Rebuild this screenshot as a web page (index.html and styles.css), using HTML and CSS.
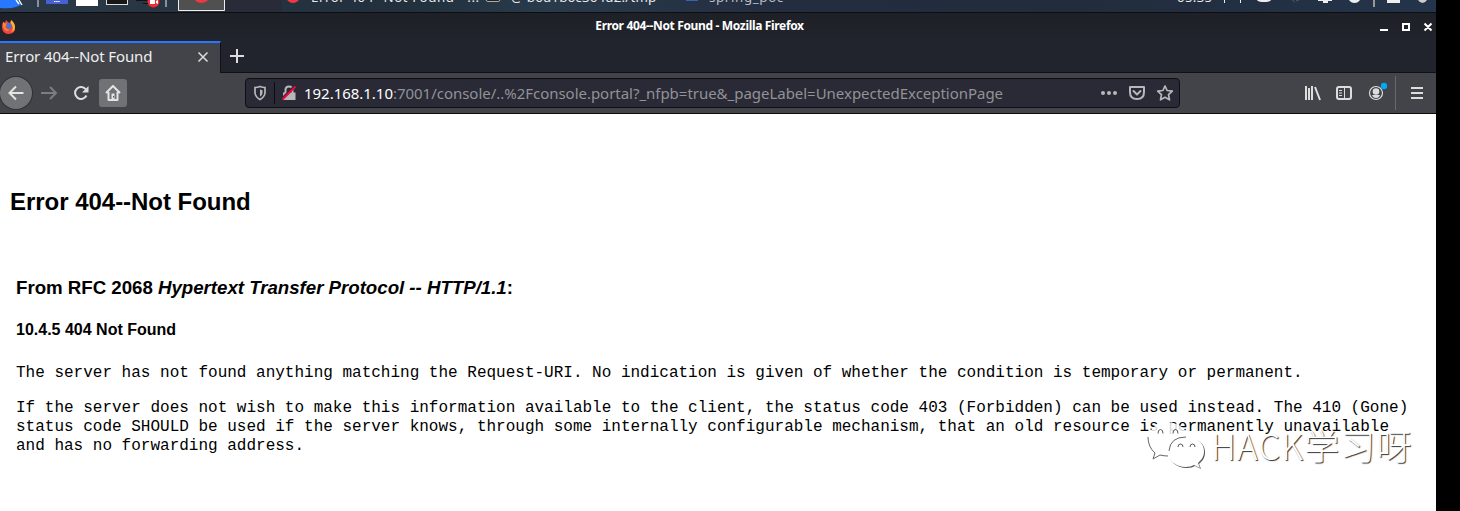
FILE: index.html
```html
<!DOCTYPE html>
<html lang="en">
<head>
<meta charset="utf-8">
<title>Error 404--Not Found</title>
<link rel="stylesheet" href="styles.css">
</head>
<body>
<div class="desktop">
  <div class="panel">
    <svg class="launchers" width="284" height="12" viewBox="0 0 284 12">
      <path d="M0 0H18L21 5 16 7Q10 9 0 8Z" fill="#2777ff"/>
      <path d="M16 0l3 4M19 0l3 5" stroke="#fff" stroke-width="1.3"/>
      <path d="M37 0h2v7h-2zM165 0h2v7h-2z" fill="#8b9095"/>
      <path d="M46 0h22v4h-22z" fill="#4561d2"/><path d="M54 1.5h6" stroke="#fff" stroke-dasharray="1.5 .6"/>
      <path d="M76 0h22v6h-22z" fill="#fff"/>
      <path d="M106 0h22v5h-22z" fill="#ddd"/><path d="M107 0h20v4h-20z" fill="#171717"/>
      <path d="M136 0h14v1h-14zM143 3h6v1h-6z" fill="#111"/>
      <circle cx="153.500" cy="1.500" r="6" fill="#ee2b35"/><path d="M150 0h5v4h-5zM156 1l2-1v4l-2-1z" fill="#fff"/>
      <path d="M178.500-2v12.500h46V-2" fill="#505050" stroke="#eee"/>
      <ellipse cx="201.500" cy="-2" rx="7" ry="5" fill="#f1373f"/>
      <path d="M225 0h57v12h-57z" fill="#292b39"/>
    </svg>
    <svg class="task-icon" width="20" height="12" viewBox="0 0 20 12"><circle cx="9" cy="-4" r="7" fill="#f1373f"/></svg>
    <span class="task t1">Error 404--Not Found - ...</span>
    <svg class="task-icon" width="22" height="12" viewBox="0 0 22 12"><rect x="3" y="-8" width="14" height="9.500" rx="2" fill="#222" stroke="#aaa"/></svg>
    <span class="task t2">@ b6d1b6c364d2:/tmp</span>
    <svg class="task-icon" width="20" height="12" viewBox="0 0 20 12"><path d="M8 0h14v1H8z" fill="#3465bd"/></svg>
    <span class="task t3">spring_poc</span>
    <span class="clock">05:35</span>
    <svg class="tray" width="223" height="12" viewBox="0 0 223 12">
      <path d="M9 0h1v3H9zM25 0h1v3h-1z" fill="#e4f3fa"/>
      <path d="M42 0h14q-1 2-7 2t-7-2z" fill="#eee"/>
      <path d="M77 0l3 2M84 0l-3 1" stroke="#556" />
      <path d="M103 0h14v1h-14zM108 1h5v2h-5z" fill="#eee"/>
      <path d="M134 0h11q-2 3-5.500 3t-5.500-3z" fill="#eee"/>
      <path d="M158 0h2v7h-2z" fill="#999"/>
      <path d="M172 0h13v3h-13z" fill="#eee"/>
      <path d="M203 0h9q-2 3-4.500 3T203 0z" fill="#ccc"/>
    </svg>
  </div>
  <div class="titlebar">
    <svg class="fox" width="16" height="16" viewBox="0 0 16 16">
      <path d="M2 3l2 1 1-3 2 2 2 1 1-3 3 4 1 3q1 6-6 7-6 0-7-6Q1 5 2 3z" fill="#f0473d"/>
      <path d="M10 1q4 3 4 7 0 4-4 5 3-3 1-7Q9 4 10 1z" fill="#ffb32f"/>
      <path d="M2 3l2 1 2 1-2 3 2 2 3 1-3 1Q1 10 2 3z" fill="#ff8238"/>
      <path d="M6 4h3l2 3q-1 3-3 3T5 8l2-1-2-1z" fill="#3d78d6"/>
    </svg>
    <span class="window-title">Error 404--Not Found - Mozilla Firefox</span>
    <svg class="window-buttons" width="60" height="16" viewBox="0 0 60 16"><path d="M4 11h8v2H4z" fill="#fff"/><path d="M27 6h6v6h-6zM48.500 5.500l7 7M55.500 5.500l-7 7" fill="none" stroke="#fff" stroke-width="2"/></svg>
  </div>
  <div class="tabs">
    <div class="tab"><span class="tab-title">Error 404--Not Found</span>
      <svg width="12" height="12" viewBox="0 0 12 12"><path d="M1.500 1.500l9 9M10.500 1.500l-9 9" stroke="#ddd" stroke-width="1.500"/></svg>
    </div>
    <svg class="new-tab" width="16" height="16" viewBox="0 0 16 16"><path d="M8 1v14M1 8h14" stroke="#ddd" stroke-width="2"/></svg>
  </div>
  <div class="toolbar">
    <div class="back"><svg width="16" height="16" viewBox="0 0 16 16"><path d="M15.500 8H1.500M8 1.500L1.500 8 8 14.500" fill="none" stroke="#e4e4e5" stroke-width="2"/></svg></div>
    <svg class="forward" width="18" height="16" viewBox="0 0 18 16"><path d="M1 8h15M10 2l6 6-6 6" fill="none" stroke="#7c7d80" stroke-width="2"/></svg>
    <svg class="reload" width="16" height="16" viewBox="0 0 16 16"><path d="M13.500 10.500A6 6 0 1 1 13 4.500" fill="none" stroke="#ddd" stroke-width="2"/><path d="M15.500 1v6.500H9z" fill="#ddd"/></svg>
    <div class="home"><svg width="16" height="16" viewBox="0 0 16 16"><path d="M1 8l7-7 7 7M3.500 7v8h9V7" fill="none" stroke="#e4e4e5" stroke-width="2" stroke-linejoin="round"/><path d="M6.500 8.500h3V15h-3z" fill="#e4e4e5"/><path d="M8 11h1v1.500H8z" fill="#555"/></svg></div>
    <div class="urlbar">
      <svg class="shield" width="14" height="16" viewBox="0 0 14 16"><path d="M2 2.500Q4.500 2.500 7 1.500q2.500 1 5 1V8q-.5 4-5 6.500Q2.500 12 2 8z" fill="none" stroke="#b8b8bb" stroke-width="1.700"/><path d="M7 4.500l2.500.7V8q0 2-2.500 3.700z" fill="#b8b8bb"/></svg>
      <span class="divider"></span>
      <svg class="lock" width="16" height="16" viewBox="0 0 16 16"><path d="M4.500 8V5q0-3.500 3.500-3.500T11.500 5v3" fill="none" stroke="#b8b8bb" stroke-width="2"/><path d="M2 7.500h12.500V15H2z" fill="#b8b8bb"/><path d="M.5 14L13.500 1" stroke="#292a35" stroke-width="2"/><path d="M1.500 14.500L14.500 1.500" stroke="#f5053f" stroke-width="2"/></svg>
      <span class="url"><span class="host">192.168.1.10</span>:7001/console/..%2Fconsole.portal?_nfpb=true&amp;_pageLabel=UnexpectedExceptionPage</span>
      <svg class="url-actions" width="76" height="18" viewBox="0 0 76 18">
        <g fill="#b8b8bb"><circle cx="4" cy="9" r="2"/><circle cx="10" cy="9" r="2"/><circle cx="16" cy="9" r="2"/></g>
        <g fill="none" stroke="#b8b8bb" stroke-width="2" stroke-linejoin="round"><path d="M31 3h14v5q0 7-7 7t-7-7z"/><path d="M34.500 7L38 10.500 41.500 7" stroke-linecap="round"/><path stroke-width="1.700" d="M66 2l2.100 4.500 5.200.6-3.800 3.600 1 5.100-4.500-2.500-4.500 2.500 1-5.100-3.800-3.600 5.200-.6z"/></g>
      </svg>
    </div>
    <div class="actions">
      <svg width="86" height="22" viewBox="0 0 86 22">
        <path d="M3 4v14M6 6v12M9 4v14M12 5l5 13" stroke="#ddd" stroke-width="2" fill="none"/>
        <rect x="34" y="5" width="14" height="12" rx="2" fill="none" stroke="#ddd" stroke-width="2"/><path d="M41.500 5v12M36 8.500h3M36 11h3M36 13.500h3" stroke="#ddd"/>
        <circle cx="73" cy="11" r="6.500" fill="none" stroke="#ddd" stroke-width="1.200"/><circle cx="73" cy="9.500" r="3.300" fill="#ddd"/><path d="M69 13h8q-1 3-4 3t-4-3z" fill="#ddd"/><circle cx="81" cy="4" r="3.200" fill="#00a9f4"/>
      </svg>
      <span class="divider"></span>
      <svg class="menu" width="14" height="14" viewBox="0 0 14 14"><path d="M1 2h12M1 7h12M1 12h12" stroke="#ddd" stroke-width="2"/></svg>
    </div>
  </div>
  <main class="page">
    <h2>Error 404--Not Found</h2>
    <section>
      <h3>From RFC 2068 <i>Hypertext Transfer Protocol -- HTTP/1.1</i>:</h3>
      <h4>10.4.5 404 Not Found</h4>
      <p>The server has not found anything matching the Request-URI. No indication is given of whether the condition is temporary or permanent.</p>
      <p>If the server does not wish to make this information available to the client, the status code 403 (Forbidden) can be used instead. The 410 (Gone)<br>status code SHOULD be used if the server knows, through some internally configurable mechanism, that an old resource is permanently unavailable<br>and has no forwarding address.</p>
    </section>
    <div class="watermark">
      <svg width="60" height="50" viewBox="0 0 60 50">
        <path d="M21 2C8 2 1 11 1 20q0 8 7 14l-2 6 7-4q5 2 10 1 18 0 18-17Q40 4 21 2z" fill="#fff" fill-opacity=".85"/>
        <path d="M1 17q0 10 7 16l-2 6 7-4q4 1 8 1" fill="none" stroke="#666"/>
        <path class="bubble" d="M39 17c-12 0-18 7-18 15s7 15 18 15q5 0 8-2l6 3-2-5q6-5 6-11 0-14-18-15z"/>
        <path d="M22 31q1-14 17-14" fill="none" stroke="#666"/>
        <g fill="none" stroke="#555"><path d="M11 13.500q0-4 2.500-4t2.500 4M26 13.500q0-4 2.500-4t2.500 4M31 27q0-3 2.500-3t2.500 3M43 27q0-3 2.500-3t2.500 3"/></g>
      </svg>
      <span>HACK学习呀</span>
    </div>
  </main>
</div>
</body>
</html>
```
FILE: styles.css
```css
* { box-sizing: border-box; }
body { margin: 0; background: #000; overflow: hidden; font-family: "Noto Sans", sans-serif; }
svg { display: block; flex: none; }
.desktop { width: 1436px; height: 511px; display: flex; flex-direction: column; background: #fff; }
.panel { height: 13px; flex: none; display: flex; overflow: hidden; background: linear-gradient(90deg, #2c3948, #21303c 28%, #293a4b 38%, #242d40 55%, #222c3c 75%, #24344a); border-bottom: 1px solid #0d0e12; }
.task, .clock { height: 20px; margin-top: -13px; line-height: 20px; font-size: 13.3px; white-space: nowrap; color: #e8e8e8; flex: none; }
.t1 { width: 179px; padding-left: 7px; letter-spacing: .55px; }
.t2 { width: 173px; padding-left: 6px; letter-spacing: .2px; }
.t3 { color: #b8bdc5; padding-left: 11px; width: 480px; letter-spacing: .65px; }
.clock { width: 38px; margin-left: -1px; letter-spacing: .3px; }
.titlebar { height: 28px; flex: none; display: flex; align-items: center; background: linear-gradient(#1e2027, #22242d); }
.fox { margin-left: 1px; }
.window-title { flex: 1; margin: -2px 0 0 6px; text-align: center; color: #fff; font-size: 12px; letter-spacing: -.34px; font-weight: 700; line-height: 16px; }
.window-buttons { margin: -3px 0 0; }
.tabs { height: 32px; flex: none; display: flex; background: #22242d; border-bottom: 1px solid #101116; }
.tab { width: 221px; height: 32px; margin-bottom: -1px; display: flex; align-items: center; justify-content: space-between; padding: 0 11px 1px 5px; background: #42444a; border-top: 2px solid #2777ff; border-right: 1px solid #101116; color: #f0f0f0; font-size: 15px; letter-spacing: -.1px; line-height: 20px; }
.tab-title { margin-top: -3px; }
.tab svg { margin-top: -1px; }
.new-tab { margin: 7px 0 0 8px; }
.toolbar { height: 41px; flex: none; display: flex; align-items: center; background: #42444a; border-bottom: 1px solid #0b0b0d; }
.back { width: 32px; height: 32px; display: grid; place-items: center; border-radius: 50%; background: #717276; box-shadow: 0 0 0 1px #303137; }
.forward { margin-left: 8px; }
.reload { margin-left: 15px; }
.home { width: 28px; height: 28px; margin-left: 10px; border-radius: 3px; display: grid; place-items: center; background: #717276; }
.urlbar { width: 935px; height: 30px; margin-left: 118px; padding: 0 4px 0 7px; display: flex; align-items: center; background: #292a35; border: 1px solid #0e0f14; border-radius: 4px; }
.urlbar .divider { width: 1px; height: 22px; background: #0c0c0e; margin-left: 7px; }
.lock { margin-left: 6px; }
.url { flex: 1; margin-left: 7px; font-size: 15px; letter-spacing: -.027px; line-height: 22px; color: #929297; white-space: nowrap; }
.host { color: #fff; }
.actions { display: flex; align-items: center; margin-left: 123px; }
.actions .divider { width: 1px; height: 34px; margin-left: 6px; background: #68696d; }
.menu { margin-left: 14px; }
.page { flex: 1; position: relative; padding: 74px 10px 0; color: #000; }
h2, h3, h4, p { margin: 0; white-space: nowrap; }
h2, h3, h4 { font-family: "Liberation Sans", Arial, sans-serif; }
h2 { font-size: 24px; line-height: 28px; letter-spacing: -.03px; }
section { padding: 61px 0 0 6px; }
h3 { font-size: 18.72px; line-height: 22px; letter-spacing: -.03px; }
h4 { font-size: 16px; line-height: 18px; margin: 22px 0 25px; }
p { font: 16px/19px "Liberation Mono", monospace; margin-bottom: 16px; }
.watermark { position: absolute; left: 1147px; top: 306px; display: flex; }
.watermark span { margin-left: 4px; font: 300 35px/50px "Noto Sans CJK SC", sans-serif; letter-spacing: 1.1px; color: #fff; text-shadow: 1px 1px 1px #333; white-space: nowrap; }
.bubble { fill: #fff; filter: drop-shadow(1px 1px .5px #555); }
```
